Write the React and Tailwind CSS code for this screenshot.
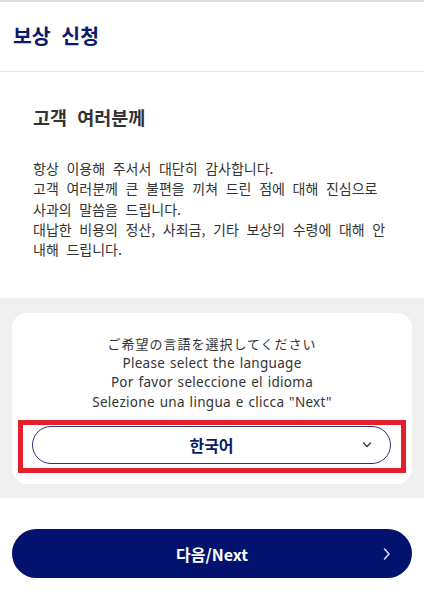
import React from 'react';

const kr = { fontFamily: '"Noto Sans CJK KR", "Noto Sans", sans-serif' };
const latin = { fontFamily: '"Noto Sans", "Noto Sans CJK KR", sans-serif' };

const App = () => {
  return (
    <div className="w-[424px] min-h-[603px] bg-white text-[#333]" style={kr}>
      {/* header */}
      <div className="border-t-2 border-b border-t-[#dcdcdc] border-b-[#e6e6e6] h-[72px] flex items-center px-[13px]">
        <h1 className="text-[20.5px] font-bold text-[#0b1a6b] leading-none -mt-[2px] [word-spacing:6px]">보상 신청</h1>
      </div>

      {/* greeting */}
      <div className="px-[33px] pt-[32px] pb-[39px]">
        <h2 className="text-[18.5px] font-bold leading-[26px] text-[#333] [word-spacing:6px]">고객 여러분께</h2>
        <p className="mt-[28px] text-[14px] leading-[20.3px] text-[#333] whitespace-nowrap [word-spacing:4.5px]">
          항상 이용해 주서서 대단히 감사합니다.
          <br />
          고객 여러분께 큰 불편을 끼쳐 드린 점에 대해 진심으로
          <br />
          사과의 말씀을 드립니다.
          <br />
          대납한 비용의 정산, 사죄금, 기타 보상의 수령에 대해 안
          <br />
          내해 드립니다.
        </p>
      </div>

      {/* language picker */}
      <div className="bg-[#f0f0f0] px-[12px] pt-[15px] pb-[14px]">
        <div className="bg-white rounded-[15px] pt-[21px] pb-[11px] px-[6px]">
          <div className="text-center text-[13px] leading-[19.5px] text-[#333]">
            <p className="tracking-[1px]" style={{ fontFamily: '"Noto Sans CJK JP", sans-serif' }}>
              ご希望の言語を選択してください
            </p>
            <p className="text-[13.5px] tracking-[0.3px] [word-spacing:1px]" style={latin}>Please select the language</p>
            <p className="text-[13.5px] tracking-[0.3px] [word-spacing:1px]" style={latin}>Por favor seleccione el idioma</p>
            <p className="text-[13.5px] tracking-[0.3px] [word-spacing:1px]" style={latin}>Selezione una lingua e clicca "Next"</p>
          </div>
          <div className="mt-[8px] border-[5px] border-[#e41e2b] pt-[1px] pb-[4px] pl-[9px] pr-[10px]">
            <button className="relative w-full h-[38px] rounded-full border border-[#2b3275] bg-white flex items-center justify-center">
              <span className="text-[16px] font-bold text-[#0b1a6b] leading-none">한국어</span>
              <svg className="absolute right-[18px] top-1/2 -translate-y-1/2" width="10" height="7" viewBox="0 0 10 7" fill="none">
                <path d="M1.5 1.5 L5 5 L8.5 1.5" stroke="#444" strokeWidth="1.5" strokeLinecap="round" strokeLinejoin="round" />
              </svg>
            </button>
          </div>
        </div>
      </div>

      {/* next */}
      <div className="px-[12px] pt-[31px] pb-[25px]">
        <button className="relative w-full h-[49px] rounded-full bg-[#02136f] flex items-center justify-center">
          <span className="text-[16px] font-bold text-white leading-none">다음/Next</span>
          <svg className="absolute right-[21px] top-1/2 -translate-y-1/2" width="8" height="13" viewBox="0 0 8 13" fill="none">
            <path d="M1.5 1.5 L6 6.5 L1.5 11.5" stroke="#d6dcff" strokeWidth="1.6" strokeLinecap="round" strokeLinejoin="round" />
          </svg>
        </button>
      </div>
    </div>
  );
};

export default App;
